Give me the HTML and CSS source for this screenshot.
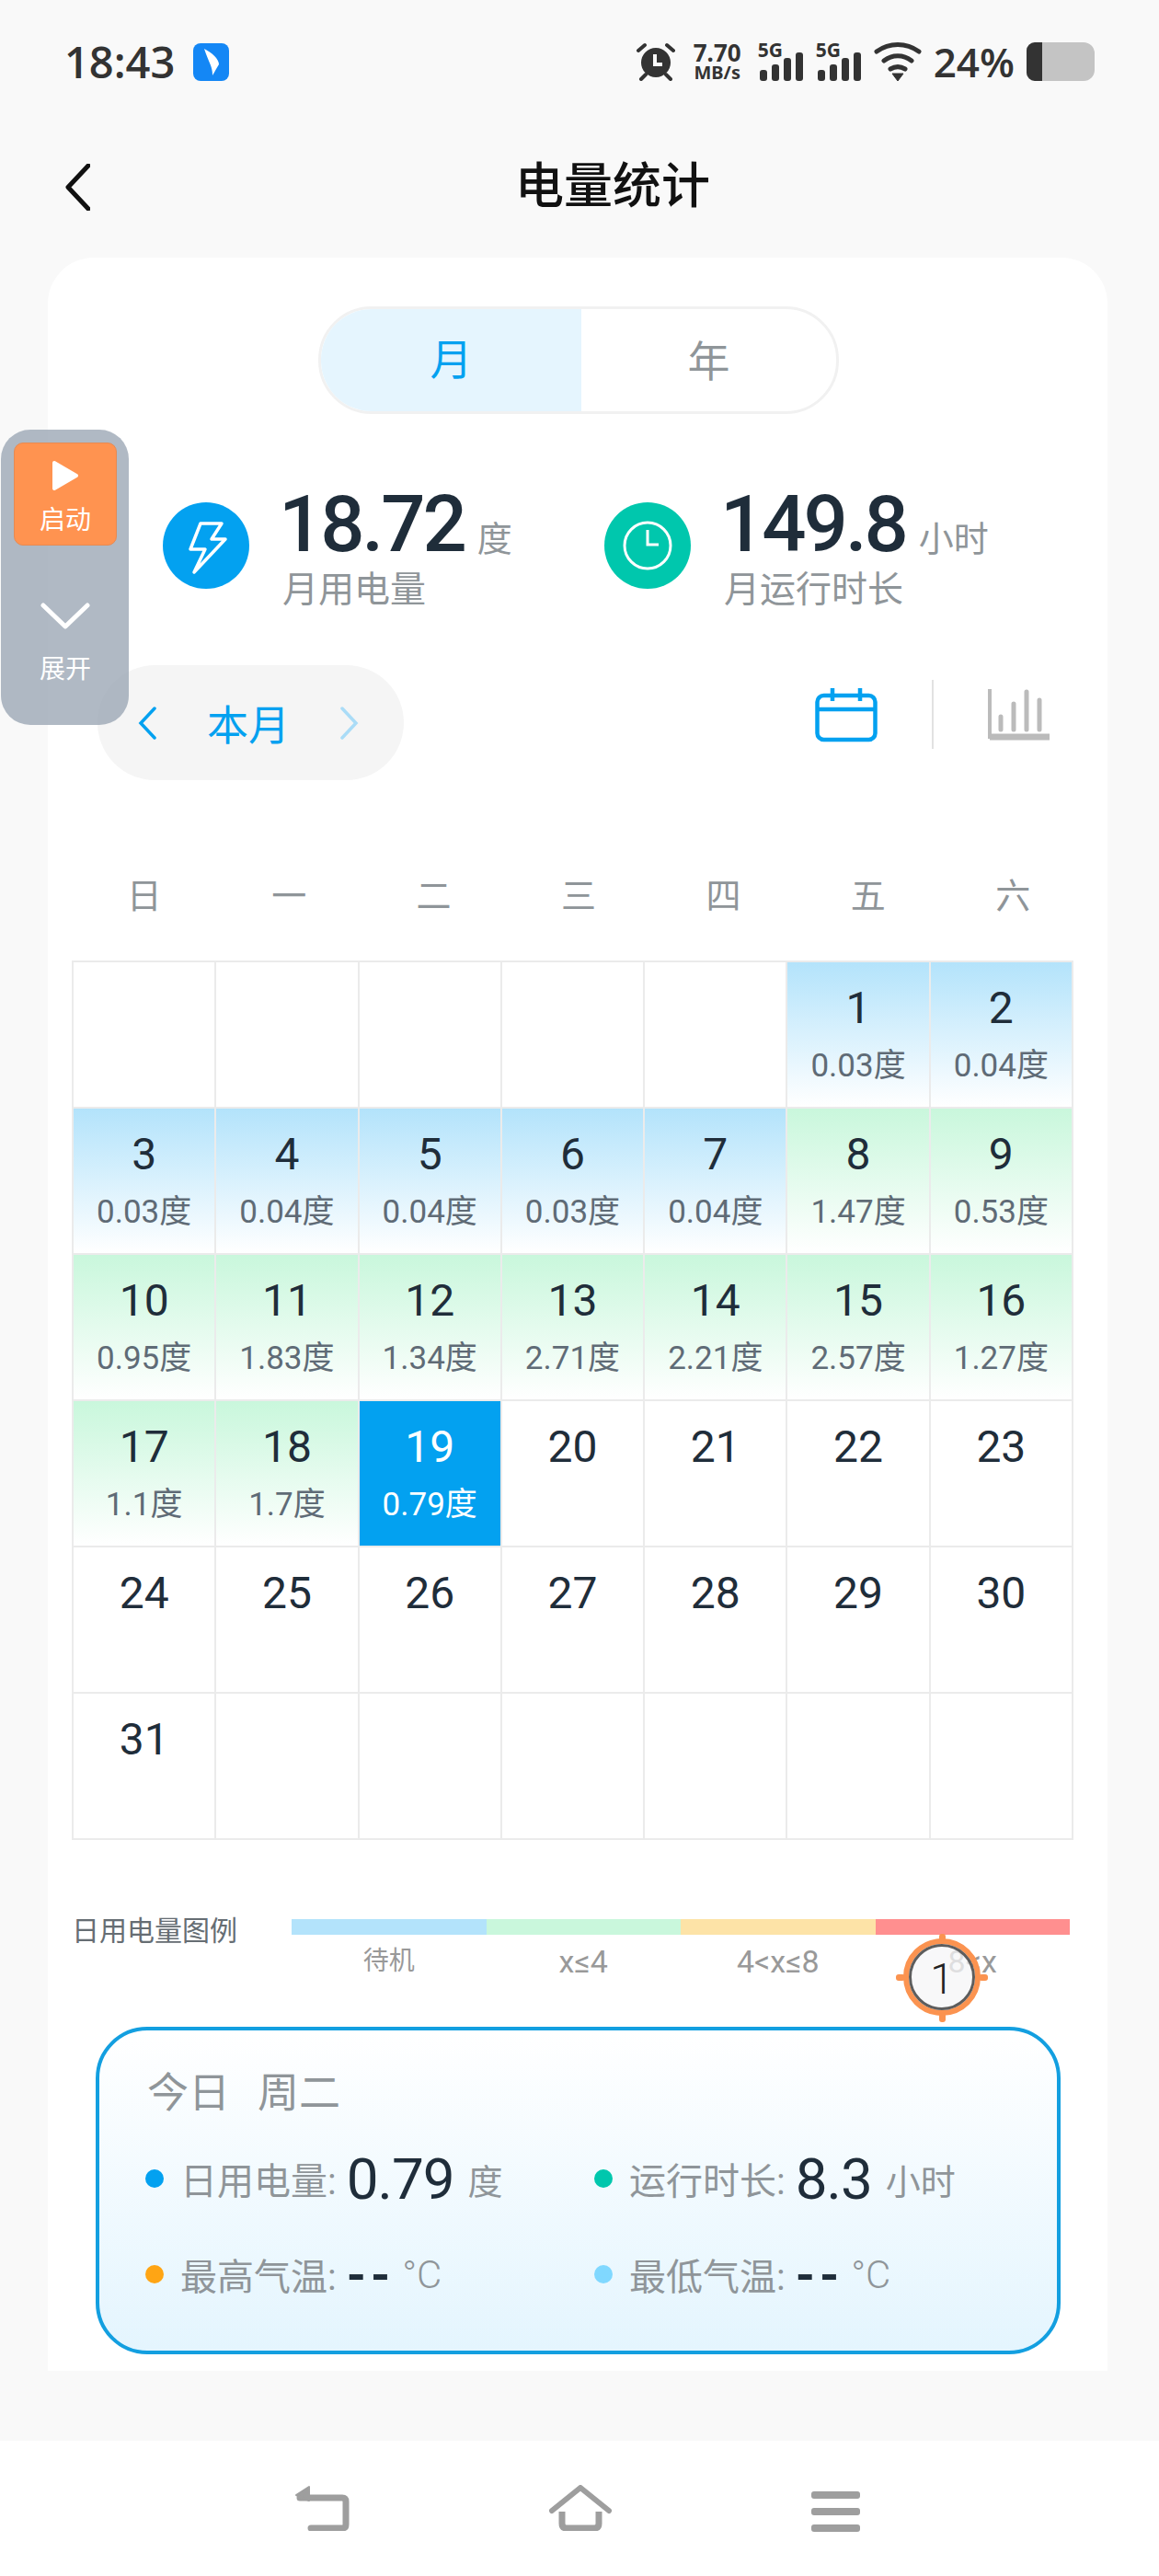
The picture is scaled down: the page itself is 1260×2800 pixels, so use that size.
FILE: index.html
```html
<!DOCTYPE html>
<html>
<head>
    <meta charset="UTF-8">
    <title>电量统计</title>
    <link rel="stylesheet" href="styles.css">
</head>
<body>
<div class="status">
    <div class="status-left">
        <span class="time">18:43</span>
        <svg class="app-icon" width="39" height="41" viewBox="0 0 39 41"><rect width="39" height="41" rx="8" fill="#1487f5"/><path d="M12 6C20 10 28 17 28 23C26 26 24 30 21 35C21 30 20 27 19 24C17 19 14 12 12 6Z" fill="#fff"/></svg>
    </div>
    <div class="status-right">
        <svg width="42" height="42" viewBox="0 0 42 42"><circle cx="21" cy="22" r="16" fill="#333"/><path d="M20 13V24H28" fill="none" stroke="#f9f9f9" stroke-width="4"/><path d="M2 9L9 3M40 9L33 3M5 40L10 35M37 40L32 35" stroke="#333" stroke-width="4" stroke-linecap="round"/></svg>
        <div class="speed"><span class="speed-num">7.70</span><span class="speed-unit">MB/s</span></div>
        <div class="signal">
            <span class="signal-label">5G</span>
            <svg width="50" height="42" viewBox="0 0 50 42"><rect x="2" y="30" width="8" height="12" rx="3" fill="#333"/><rect x="15" y="24" width="8" height="18" rx="3" fill="#333"/><rect x="28" y="17" width="8" height="25" rx="3" fill="#333"/><rect x="41" y="11" width="8" height="31" rx="3" fill="#333"/></svg>
        </div>
        <div class="signal">
            <span class="signal-label">5G</span>
            <svg width="50" height="42" viewBox="0 0 50 42"><rect x="2" y="30" width="8" height="12" rx="3" fill="#333"/><rect x="15" y="24" width="8" height="18" rx="3" fill="#333"/><rect x="28" y="17" width="8" height="25" rx="3" fill="#333"/><rect x="41" y="11" width="8" height="31" rx="3" fill="#333"/></svg>
        </div>
        <svg width="52" height="42" viewBox="0 0 52 42"><path d="M3 10C17 0 35 0 49 10M11 20C20 13 32 13 41 20M18 29C23 26 29 26 34 29" fill="none" stroke="#333" stroke-width="5" stroke-linecap="round"/><path d="M20 34H32L26 42Z" fill="#333" stroke="#333" stroke-linejoin="round"/></svg>
        <span class="percent">24%</span>
        <div class="battery"><div class="battery-fill"></div></div>
    </div>
</div>

<div class="topbar">
    <svg class="back" width="27" height="51" viewBox="0 0 27 51"><path d="M25 2L3 25.500L25 49" fill="none" stroke="#111" stroke-width="5" stroke-linecap="round" stroke-linejoin="round"/></svg>
    <span class="title">电量统计</span>
</div>

<div class="card">
    <div class="toggle">
        <div class="toggle-item toggle-on">月</div>
        <div class="toggle-item">年</div>
    </div>

    <div class="stats">
        <div class="stat">
            <svg class="stat-icon" width="94" height="94" viewBox="0 0 94 94"><circle cx="47" cy="47" r="47" fill="#03a1f0"/><path d="M41 23H64L53 40H68L34 76L46 51H30Z" fill="none" stroke="#fff" stroke-width="3.500" stroke-linejoin="round"/></svg>
            <div>
                <div class="stat-line"><span class="stat-num">18.72</span><span class="stat-unit">度</span></div>
                <div class="stat-name">月用电量</div>
            </div>
        </div>
        <div class="stat">
            <svg class="stat-icon" width="94" height="94" viewBox="0 0 94 94"><circle cx="47" cy="47" r="47" fill="#00c7ad"/><circle cx="47" cy="47" r="25" fill="none" stroke="#fff" stroke-width="3"/><path d="M47 30V46H59" fill="none" stroke="#fff" stroke-width="3"/></svg>
            <div>
                <div class="stat-line"><span class="stat-num">149.8</span><span class="stat-unit">小时</span></div>
                <div class="stat-name">月运行时长</div>
            </div>
        </div>
    </div>

    <div class="tools">
        <div class="month">
            <svg width="20" height="36" viewBox="0 0 20 36"><path d="M18 2L3 18L18 34" fill="none" stroke="#03a1f0" stroke-width="3.500" stroke-linecap="round"/></svg>
            <span class="month-text">本月</span>
            <svg width="20" height="36" viewBox="0 0 20 36"><path d="M2 2L17 18L2 34" fill="none" stroke="#aadcf7" stroke-width="3.500" stroke-linecap="round"/></svg>
        </div>
        <div class="views">
            <svg width="68" height="60" viewBox="0 0 68 60"><rect x="2.500" y="9" width="63" height="48" rx="7" fill="none" stroke="#03a1f0" stroke-width="4.500"/><path d="M3 24H65M19 1V15M49 1V15" fill="none" stroke="#03a1f0" stroke-width="4.500"/></svg>
            <div class="views-line"></div>
            <svg width="68" height="56" viewBox="0 0 68 56"><path d="M2 0V52H67" fill="none" stroke="#bbb" stroke-width="4"/><path d="M2 52H67" stroke="#bbb" stroke-width="7"/><path d="M14 30V44M28 16V44M42 3V44M56 12V44" stroke="#bbb" stroke-width="5" stroke-linecap="round"/></svg>
        </div>
    </div>

    <div class="week">
        <span>日</span><span>一</span><span>二</span><span>三</span><span>四</span><span>五</span><span>六</span>
    </div>

    <div class="cal">
        <div class="day"></div><div class="day"></div><div class="day"></div><div class="day"></div><div class="day"></div>
        <div class="day blue"><b>1</b><i>0.03度</i></div>
        <div class="day blue"><b>2</b><i>0.04度</i></div>
        <div class="day blue"><b>3</b><i>0.03度</i></div>
        <div class="day blue"><b>4</b><i>0.04度</i></div>
        <div class="day blue"><b>5</b><i>0.04度</i></div>
        <div class="day blue"><b>6</b><i>0.03度</i></div>
        <div class="day blue"><b>7</b><i>0.04度</i></div>
        <div class="day green"><b>8</b><i>1.47度</i></div>
        <div class="day green"><b>9</b><i>0.53度</i></div>
        <div class="day green"><b>10</b><i>0.95度</i></div>
        <div class="day green"><b>11</b><i>1.83度</i></div>
        <div class="day green"><b>12</b><i>1.34度</i></div>
        <div class="day green"><b>13</b><i>2.71度</i></div>
        <div class="day green"><b>14</b><i>2.21度</i></div>
        <div class="day green"><b>15</b><i>2.57度</i></div>
        <div class="day green"><b>16</b><i>1.27度</i></div>
        <div class="day green"><b>17</b><i>1.1度</i></div>
        <div class="day green"><b>18</b><i>1.7度</i></div>
        <div class="day today"><b>19</b><i>0.79度</i></div>
        <div class="day"><b>20</b></div>
        <div class="day"><b>21</b></div>
        <div class="day"><b>22</b></div>
        <div class="day"><b>23</b></div>
        <div class="day"><b>24</b></div>
        <div class="day"><b>25</b></div>
        <div class="day"><b>26</b></div>
        <div class="day"><b>27</b></div>
        <div class="day"><b>28</b></div>
        <div class="day"><b>29</b></div>
        <div class="day"><b>30</b></div>
        <div class="day"><b>31</b></div>
        <div class="day"></div><div class="day"></div><div class="day"></div><div class="day"></div><div class="day"></div><div class="day"></div>
    </div>

    <div class="legend">
        <div class="legend-title">日用电量图例</div>
        <div class="legend-body">
            <div class="legend-bar">
                <div class="seg seg1"></div><div class="seg seg2"></div><div class="seg seg3"></div><div class="seg seg4"></div>
            </div>
            <div class="legend-names">
                <span>待机</span><span class="name-num">x≤4</span><span class="name-num">4&lt;x≤8</span><span class="name-num">8&lt;x</span>
            </div>
        </div>
    </div>

    <div class="todaybox">
        <div class="today-title"><span>今日</span><span>周二</span></div>
        <div class="today-grid">
            <div class="item"><em class="dot dot-blue"></em><span class="item-name">日用电量:</span><span class="item-val">0.79</span><span class="item-unit">度</span></div>
            <div class="item"><em class="dot dot-green"></em><span class="item-name">运行时长:</span><span class="item-val">8.3</span><span class="item-unit">小时</span></div>
            <div class="item"><em class="dot dot-orange"></em><span class="item-name">最高气温:</span><span class="item-val item-none">--</span><span class="item-unit item-deg">°C</span></div>
            <div class="item"><em class="dot dot-sky"></em><span class="item-name">最低气温:</span><span class="item-val item-none">--</span><span class="item-unit item-deg">°C</span></div>
        </div>
    </div>
</div>

<div class="nav">
    <svg width="60" height="50" viewBox="0 0 60 50"><path d="M6 14H52Q56 14 56 18V43Q56 47 52 47H18" fill="none" stroke="#9e9e9e" stroke-width="7" stroke-linecap="round"/><path d="M2 11L16 2V17Z" fill="#9e9e9e" stroke="#9e9e9e" stroke-width="2" stroke-linejoin="round"/></svg>
    <svg width="68" height="50" viewBox="0 0 68 50"><path d="M3 28L34 3L65 28" fill="none" stroke="#9e9e9e" stroke-width="6" stroke-linecap="round" stroke-linejoin="round"/><path d="M14 29V42Q14 47 19 47H49Q54 47 54 42V29" fill="none" stroke="#9e9e9e" stroke-width="7"/></svg>
    <div class="menu"><span></span><span></span><span></span></div>
</div>

<!-- 悬浮按钮 -->
<div class="float">
    <div class="float-start">
        <svg width="30" height="34" viewBox="0 0 30 34"><path d="M3 3L27 17L3 31Z" fill="#fff" stroke="#fff" stroke-width="4" stroke-linejoin="round"/></svg>
        <span>启动</span>
    </div>
    <div class="float-open">
        <svg width="54" height="30" viewBox="0 0 54 30"><path d="M3 3L27 26L51 3" fill="none" stroke="#fff" stroke-width="5" stroke-linecap="round" stroke-linejoin="round"/></svg>
        <span>展开</span>
    </div>
</div>

<!-- 标记点 -->
<div class="marker">
    <i class="tick tick-t"></i><i class="tick tick-b"></i><i class="tick tick-l"></i><i class="tick tick-r"></i>
    <div class="marker-in">1</div>
</div>
</body>
</html>
```

FILE: styles.css
```css
*{box-sizing:border-box;}
html,body{margin:0;padding:0;}
body{position:relative;width:1260px;height:2800px;overflow:hidden;background:#f9f9f9;
    font-family:Roboto,"Noto Sans CJK SC",sans-serif;color:#1f2d3a;}
i,em{font-style:normal;}

/* 状态栏 */
.status{height:134px;padding:0 70px 0 70px;display:flex;align-items:center;justify-content:space-between;}
.status-left{display:flex;align-items:center;gap:20px;}
.time{font-family:"Open Sans",sans-serif;font-size:47px;font-weight:600;color:#333;line-height:50px;}
.status-right{display:flex;align-items:center;color:#333;}
.speed{display:flex;flex-direction:column;align-items:center;margin:0 18px 0 20px;font-family:"Noto Sans",sans-serif;font-weight:700;}
.speed-num{font-size:26px;line-height:24px;}
.speed-unit{font-size:20px;line-height:20px;}
.signal{position:relative;width:50px;height:42px;margin-right:13px;}
.signal-label{position:absolute;left:0;top:-3px;font-family:"Noto Sans",sans-serif;font-size:21px;font-weight:700;line-height:22px;}
.percent{font-family:"Open Sans",sans-serif;font-size:44px;font-weight:600;line-height:46px;margin:0 13px;}
.battery{width:74px;height:42px;border-radius:9px 12px 12px 9px;background:#c4c4c4;overflow:hidden;}
.battery-fill{width:17px;height:42px;background:#333;}

/* 标题 */
.topbar{height:138px;margin-bottom:8px;padding-left:71px;display:flex;align-items:center;position:relative;}
.title{position:absolute;left:560px;font-size:53px;font-weight:500;color:#111;line-height:60px;}

/* 主卡片 */
.card{width:1152px;height:2297px;margin-left:52px;padding-top:53px;background:#fff;border-radius:50px 50px 0 0;}
.toggle{width:566px;height:117px;margin-left:294px;display:flex;border:3px solid #f1f1f1;border-radius:58px;overflow:hidden;}
.toggle-item{flex:1;padding-bottom:6px;display:flex;align-items:center;justify-content:center;font-size:46px;color:#8f9599;}
.toggle-on{flex:none;width:283px;padding-bottom:9px;background:#e5f5fe;color:#03a1f0;}

.stats{display:flex;margin:78px 0 0 125px;}
.stat{width:480px;display:flex;gap:36px;}
.stat-icon{margin-top:18px;flex:none;}
.stat-line{height:84px;display:flex;align-items:baseline;line-height:84px;}
.stat-num{margin-left:-4px;font-size:85px;font-weight:500;letter-spacing:-3px;color:#1f2d3a;}
.stat-unit{font-size:38px;color:#8f9599;margin-left:14px;}
.stat-name{margin-top:4px;font-size:39px;line-height:50px;color:#8f9599;}

.tools{height:125px;margin:57px 62px 0 54px;display:flex;align-items:center;justify-content:space-between;}
.month{width:333px;height:125px;padding:0 49px 0 44px;display:flex;align-items:center;justify-content:space-between;background:#f5f5f5;border-radius:63px;}
.month-text{font-size:45px;color:#03a1f0;}
.views{display:flex;align-items:center;gap:59px;margin-bottom:18px;}
.views-line{width:2px;height:75px;background:#e2e2e2;}

.week{height:60px;margin:96px 24px 40px 26px;display:grid;grid-template-columns:repeat(7,1fr);}
.week span{text-align:center;font-size:38px;line-height:60px;color:#8f9599;}

.cal{width:1089px;margin-left:26px;display:grid;grid-template-columns:repeat(7,1fr);grid-auto-rows:159px;
    border-top:2px solid #ebebeb;border-left:2px solid #ebebeb;}
.day{border-right:2px solid #ebebeb;border-bottom:2px solid #ebebeb;text-align:center;padding-top:22px;}
.day b{display:block;font-size:48px;font-weight:400;line-height:56px;color:#1f2d3a;}
.day i{display:block;margin-top:13px;font-size:35px;line-height:44px;color:#5f6b76;}
.blue{background:linear-gradient(#b3e3fb,#fff);}
.green{background:linear-gradient(#c9f7dc,#fff);}
.today{background:#03a1f0;}
.today b,.today i{color:#fff;}

/* 图例 */
.legend{margin:79px 41px 0 26px;display:flex;justify-content:space-between;}
.legend-title{font-size:30px;line-height:40px;color:#666d73;}
.legend-body{width:846px;padding-top:7px;}
.legend-bar{display:flex;height:17px;}
.seg{flex:1;}
.seg1{background:#b3e3fb;}
.seg2{background:#c9f7dc;}
.seg3{background:#fde3a7;}
.seg4{background:#ff8f8f;}
.legend-names{margin-top:12px;display:grid;grid-template-columns:repeat(4,1fr);}
.legend-names span{text-align:center;font-size:28px;line-height:34px;color:#999;}
.legend-names .name-num{font-size:34px;}

/* 今日 */
.todaybox{width:1049px;height:356px;margin:54px 0 0 52px;padding:44px 0 0 52px;border:4px solid #139fe0;border-radius:56px;
    background:linear-gradient(#fff,#e4f5fe);}
.today-title{display:flex;gap:30px;font-size:45px;line-height:50px;color:#8f9599;}
.today-grid{display:grid;grid-template-columns:488px 1fr;grid-auto-rows:70px;row-gap:34px;margin-top:32px;}
.item{display:flex;align-items:center;}
.dot{width:20px;height:20px;border-radius:50%;margin:0 18px 0 -2px;}
.dot-blue{background:#03a1f0;}
.dot-green{background:#00c7ad;}
.dot-orange{background:#ffa514;}
.dot-sky{background:#80d8ff;}
.item-name{font-size:40px;color:#8f9599;}
.item-val{margin-left:11px;font-size:62px;color:#1f2d3a;letter-spacing:-1px;}
.item-none{font-size:54px;font-weight:700;letter-spacing:5px;}
.item-unit{margin-left:15px;font-size:38px;color:#8f9599;}
.item-deg{margin-left:8px;font-size:42px;font-weight:300;}

/* 底部导航 */
.nav{height:147px;margin-top:76px;padding:48px 0 0 320px;background:#fff;display:flex;align-items:flex-start;gap:217px;}
.menu{width:53px;padding-top:7px;display:flex;flex-direction:column;gap:10px;}
.menu span{height:8px;border-radius:3px;background:#9e9e9e;}

/* 悬浮 */
.float{position:absolute;left:1px;top:467px;width:139px;height:321px;padding:14px 0 0 14px;border-radius:32px;background:rgba(150,161,176,.75);}
.float-start{width:112px;height:112px;padding-top:18px;display:flex;flex-direction:column;align-items:center;background:#ff9350;border:1px solid #e68a52;border-radius:10px;color:#fff;font-size:28px;line-height:36px;}
.float-start span{margin-top:14px;}
.float-open{width:112px;margin-top:62px;display:flex;flex-direction:column;align-items:center;color:#fff;font-size:28px;line-height:36px;}
.float-open span{margin-top:25px;}

.marker{position:absolute;left:982px;top:2107px;width:84px;height:84px;border:6px solid #fb9350;border-radius:50%;}
.marker-in{width:72px;height:72px;border:3px solid #5d5d5d;border-radius:50%;background:rgba(245,245,247,.75);text-align:center;font-size:46px;font-weight:300;line-height:70px;color:#222;}
.tick{position:absolute;background:#fb9350;border-radius:3px;}
.tick-t{left:33px;top:-11px;width:7px;height:8px;}
.tick-b{left:33px;bottom:-13px;width:7px;height:10px;}
.tick-l{left:-14px;top:33px;width:10px;height:7px;}
.tick-r{right:-14px;top:33px;width:10px;height:7px;}
```
